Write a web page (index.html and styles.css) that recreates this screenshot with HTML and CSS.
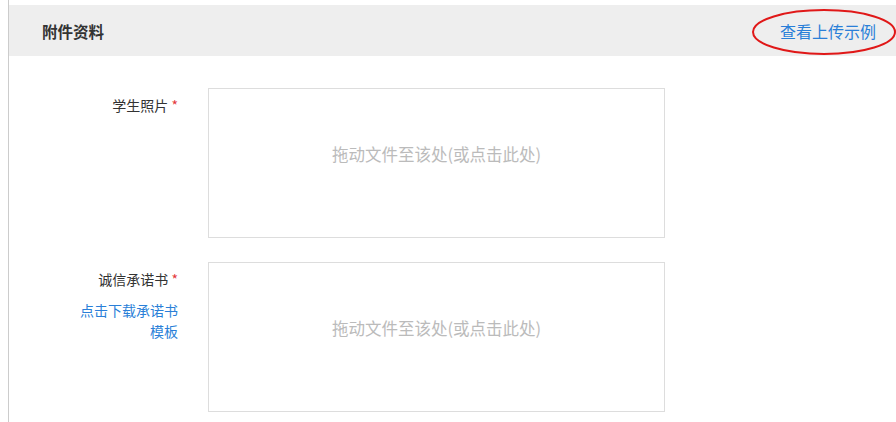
FILE: index.html
```html
<!DOCTYPE HTML>
<html lang="zh-CN">
<head>
<meta charset="UTF-8">
<title>附件资料</title>
<link rel="stylesheet" href="styles.css">
</head>

<body>
<div class="panel">
    <div class="panel-head">
        <span class="panel-title">附件资料</span>
        <span class="sample-link">
            <a href="#">查看上传示例</a>
            <!-- red circle drawn over the link -->
            <svg class="mark" width="146" height="48" viewBox="0 0 146 48">
                <ellipse cx="73" cy="24" rx="71" ry="22" fill="none" stroke="#e01818" stroke-width="2"/>
            </svg>
        </span>
    </div>

    <div class="form-row">
        <div class="label">
            <div>学生照片 <span class="req">*</span></div>
        </div>
        <div class="drop">拖动文件至该处(或点击此处)</div>
    </div>

    <div class="form-row">
        <div class="label">
            <div>诚信承诺书 <span class="req">*</span></div>
            <a class="tpl-link" href="#">点击下载承诺书模板</a>
        </div>
        <div class="drop">拖动文件至该处(或点击此处)</div>
    </div>
</div>
</body>
</html>
```

FILE: styles.css
```css
body {
    margin: 0;
    background-color: #fff;
    font-family: "Noto Sans CJK SC", "Noto Sans", sans-serif;
    color: #333;
}

.panel {
    margin-left: 8px;
    border-left: 1px solid #cccccc;
    padding-top: 5px;
    min-height: 417px;
}

.panel-head {
    display: flex;
    justify-content: space-between;
    align-items: center;
    height: 51px;
    padding: 0 20px 0 33px;
    background-color: #eeeeee;
}

.panel-title {
    font-size: 15.5px;
    font-weight: bold;
    color: #333;
}

.sample-link {
    position: relative;
    line-height: 22px;
}

.sample-link a {
    font-size: 16px;
    color: #2a7fd8;
    text-decoration: none;
}

.mark {
    position: absolute;
    left: -29px;
    top: -12px;
}

.form-row {
    display: flex;
    gap: 30px;
    padding-left: 69px;
    margin-top: 32px;
}

.form-row + .form-row {
    margin-top: 24px;
}

.label {
    width: 100px;
    padding-top: 7px;
    text-align: right;
    font-size: 14px;
    line-height: 21px;
    color: #333;
}

.req {
    color: #e4393c;
}

.tpl-link {
    display: block;
    margin-top: 10px;
    color: #2a7fd8;
    text-decoration: none;
}

.drop {
    box-sizing: border-box;
    width: 457px;
    height: 150px;
    border: 1px solid #dddddd;
    padding-top: 54px;
    text-align: center;
    font-size: 16.5px;
    line-height: 22px;
    color: #bbbbbb;
}
```
